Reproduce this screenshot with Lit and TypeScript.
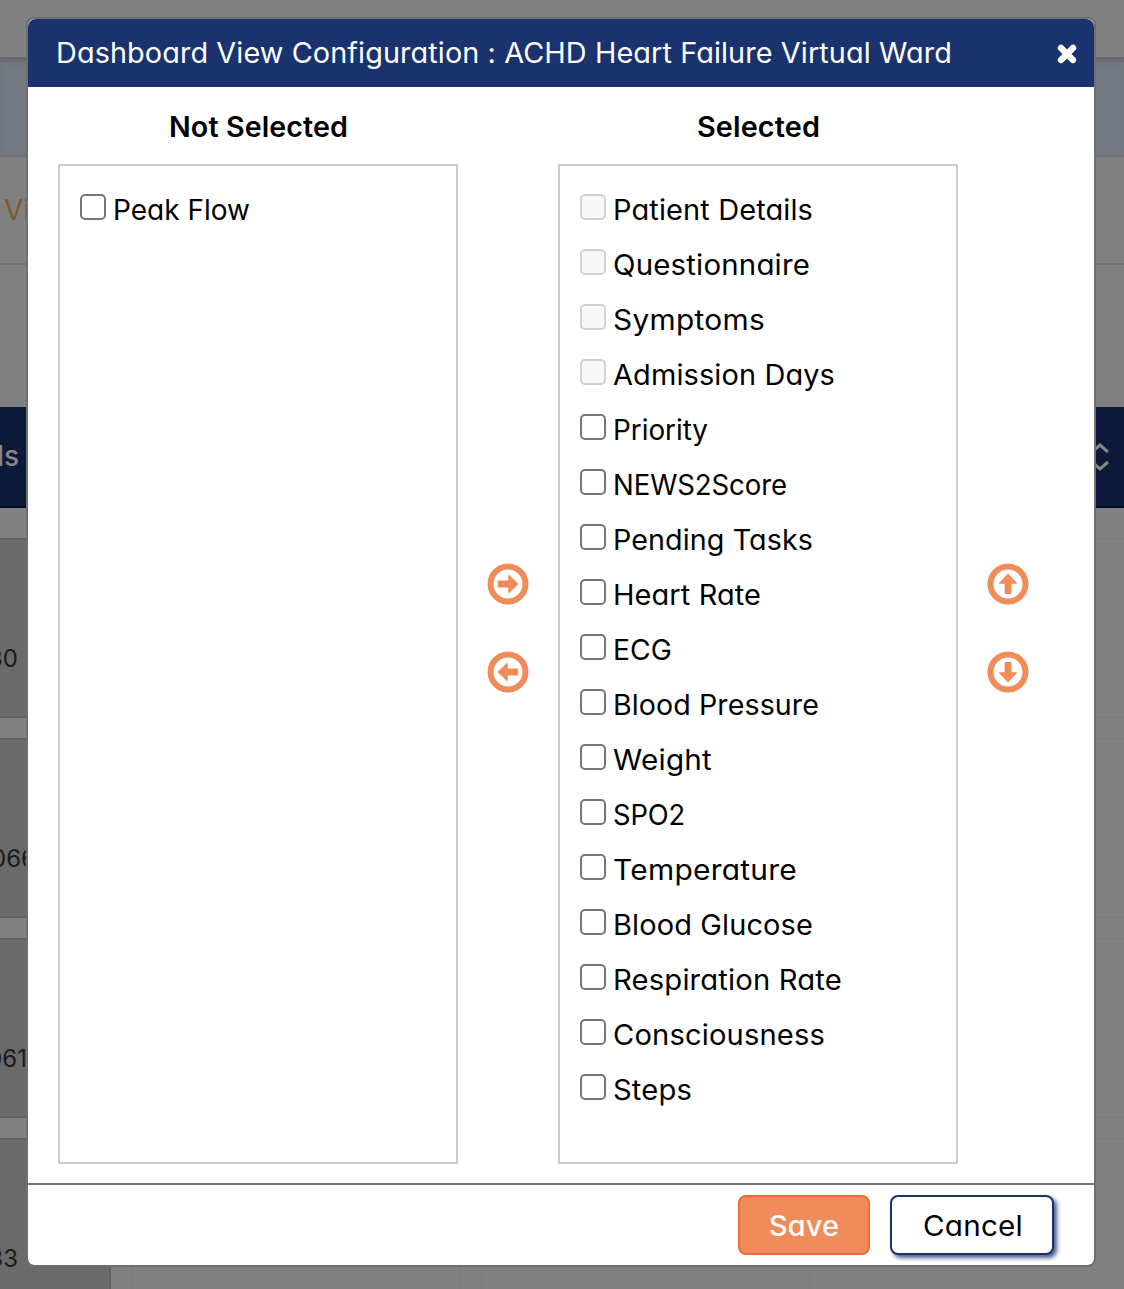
import { LitElement, html, css, svg } from "lit";
import { customElement, property, state } from "lit/decorators.js";

/** Text fitted to a given advance, mostly by stretching, the rest by tracking. */
@customElement("tracked-text")
class TrackedText extends LitElement {
  static styles = css`
    :host { display: inline-block; white-space: pre; padding-top: 1px; }
    .fit { display: block; }
    .text { display: inline-block; transform-origin: 0 50%; }
  `;
  @property() text = "";
  @property({ type: Number }) width = 0;
  @state() spacing = 0;
  @state() stretch = 1;

  firstUpdated() {
    const span = this.renderRoot.querySelector(".text")!;
    const natural = span.getBoundingClientRect().width;
    if (!this.width || !natural) return;
    this.stretch = 1 + (this.width / natural - 1) * 0.8;
    this.spacing = (this.width / this.stretch - natural) / Math.max(1, this.text.length);
  }

  render() {
    return html`<span class="fit" style="width:${this.width}px"><span class="text"
      style="letter-spacing:${this.spacing.toFixed(3)}px;transform:scaleX(${this.stretch.toFixed(4)})">${this.text}</span></span>`;
  }
}

interface Item { label: string; width: number; locked?: boolean; }

const available: Item[] = [{ label: "Peak Flow", width: 137 }];

const selected: Item[] = [
  { label: "Patient Details", width: 200, locked: true },
  { label: "Questionnaire", width: 197, locked: true },
  { label: "Symptoms", width: 152, locked: true },
  { label: "Admission Days", width: 222, locked: true },
  { label: "Priority", width: 95 },
  { label: "NEWS2Score", width: 174 },
  { label: "Pending Tasks", width: 200 },
  { label: "Heart Rate", width: 148 },
  { label: "ECG", width: 59 },
  { label: "Blood Pressure", width: 206 },
  { label: "Weight", width: 99 },
  { label: "SPO2", width: 72 },
  { label: "Temperature", width: 184 },
  { label: "Blood Glucose", width: 200 },
  { label: "Respiration Rate", width: 229 },
  { label: "Consciousness", width: 212 },
  { label: "Steps", width: 79 },
];

const arrow = (turn: number) => html`
  <button class="arrow" aria-label="Move">
    <svg width="42" height="42" viewBox="-21 -21 42 42">
      <circle r="17.5" fill="none" stroke="#f08c5a" stroke-width="6"></circle>
      ${svg`<path transform="rotate(${turn})" fill="#f08c5a"
        d="M-9.2 -3.4H.2V-8.3Q.2 -9.6 1.3 -8.8L9.8 -.7Q10.5 0 9.8 .7L1.3 8.8Q.2 9.6 .2 8.3V3.4H-9.2Q-10.2 3.4 -10.2 2.4V-2.4Q-10.2 -3.4 -9.2 -3.4Z"/>`}
    </svg>
  </button>`;

@customElement("app-root")
class AppRoot extends LitElement {
  static styles = css`
    :host {
      display: block; position: relative; width: 1124px; height: 1289px; overflow: hidden;
      background: #808080; color: #000;
      font-family: Inter, "Open Sans", "Liberation Sans", sans-serif;
      font-size: 28px; font-weight: 430; font-feature-settings: "cv11";
    }
    * { box-sizing: border-box; }
    .page { display: flex; flex-direction: column; height: 1289px; overflow: hidden; }
    .top { height: 57px; flex: none; }
    .band {
      height: 100px; flex: none; background: #747981;
      box-shadow: inset 0 7px 7px -4px #5f6469, inset 0 -3px 2px -1px #6d7178;
    }
    .tabs {
      height: 108px; flex: none; border-bottom: 2px solid #707070;
      padding-left: 4px; line-height: 107px; color: #80592b;
    }
    .space { height: 142px; flex: none; }
    .thead {
      height: 101px; flex: none; background: #0c1938; border-bottom: 2px solid #050d28;
      display: flex; justify-content: space-between; align-items: center;
      color: #858585; padding-right: 15px; margin-bottom: 30px;
    }
    .thead .col { margin-left: -3px; padding-bottom: 1px; font-weight: 500; }
    .record {
      height: 180px; flex: none; margin-bottom: 20px; display: flex; gap: 20px;
    }
    .cell { border: 2px solid #7d7d7d; flex: none; width: 330px; }
    .cell.id {
      width: 111px; background: #6a6a6a; border-color: #616161; border-left: 0;
      padding-top: 104px; line-height: 30px; font-size: 24px; color: #1b1b1b;
      overflow: hidden; display: flex; align-items: flex-start;
    }
    .cell.id .clip { width: 26px; display: flex; justify-content: flex-end; white-space: nowrap; }
    .clip .end { flex: none; }
    .end.a { margin-right: 8px; }
    .end.b { margin-right: -10px; }
    .end.c { margin-right: -1px; }
    .modal {
      position: absolute; left: 26px; top: 17px; width: 1070px; height: 1250px;
      border: 2px solid #6f6f6f; border-radius: 8px; background: #fff;
      display: flex; flex-direction: column; background-clip: padding-box;
    }
    .head {
      height: 68px; flex: none; background: #1a336f; color: #fff;
      border-radius: 8px 8px 0 0; padding: 0 16px 2px 28px;
      display: flex; align-items: center; justify-content: space-between;
    }
    .close { display: block; margin-top: 4px; }
    .body { display: flex; flex: 1; padding: 0 0 0 30px; }
    .col-list { width: 400px; display: flex; flex-direction: column; }
    .col-title {
      height: 77px; display: flex; align-items: center; justify-content: center;
      padding-top: 2px; font-weight: 560;
    }
    .list { height: 1000px; border: 2px solid #ccc; padding: 16px 0 0 20px; }
    .row { height: 55px; display: flex; align-items: center; }
    .box {
      appearance: none; margin: 0 7px 5px 0; width: 26px; height: 26px; flex: none;
      border: 2px solid #767676; border-radius: 5px; background: #fff;
    }
    .box:disabled { border-color: #d1d1d1; background: #f8f8f8; }
    .moves {
      width: 100px; display: flex; flex-direction: column; align-items: center;
      gap: 46px; padding-top: 476px;
    }
    .arrow { border: 0; background: none; padding: 0; margin: 0; width: 42px; height: 42px; }
    .arrow svg { display: block; }
    .foot {
      height: 82px; flex: none; border-top: 2px solid #747474;
      display: flex; justify-content: flex-end; gap: 20px; padding: 10px 40px 0 0;
    }
    .btn {
      height: 60px; border-radius: 8px; padding: 0 3px 0 0; font: inherit;
      font-feature-settings: "cv11"; display: flex; align-items: center; justify-content: center;
    }
    .save { width: 132px; background: #f08c5a; border: 2px solid #ed6c35; color: #fff; font-weight: 500; }
    .cancel {
      width: 164px; background: #fff; border: 2px solid #1a336f; color: #000;
      box-shadow: 3px 3px 4px #1a336fcc;
    }
  `;

  private item(i: Item) {
    return html`<label class="row">
      <input class="box" type="checkbox" ?disabled=${i.locked} />
      <tracked-text .text=${i.label} .width=${i.width}></tracked-text>
    </label>`;
  }

  private record(id: string, place: string) {
    return html`<div class="record">
      <div class="cell id"><div class="clip"><span class="end ${place}">${id}</span></div></div>
      <div class="cell"></div><div class="cell"></div><div class="cell"></div>
    </div>`;
  }

  render() {
    return html`
      <div class="page">
        <div class="top"></div>
        <div class="band"></div>
        <div class="tabs">Vi</div>
        <div class="space"></div>
        <div class="thead">
          <span class="col">ls</span>
          <svg width="18" height="28" viewBox="0 0 18 28" fill="none" stroke="#858585" stroke-width="3">
            <path d="M1 9L9 2L17 9M1 19L9 26L17 19"></path>
          </svg>
        </div>
        ${this.record("30", "a")} ${this.record("066", "b")}
        ${this.record("061", "c")} ${this.record("33", "a")}
      </div>
      <div class="modal">
        <div class="head">
          <tracked-text .text=${"Dashboard View Configuration : ACHD Heart Failure Virtual Ward"} .width=${896}></tracked-text>
          <svg class="close" width="22" height="22" viewBox="-11 -11 22 22" stroke="#fff" stroke-width="6.4" stroke-linecap="round">
            <path d="M-6 -6L6 6M6 -6L-6 6"></path>
          </svg>
        </div>
        <div class="body">
          <div class="col-list">
            <div class="col-title"><tracked-text .text=${"Not Selected"} .width=${179}></tracked-text></div>
            <div class="list">${available.map((i) => this.item(i))}</div>
          </div>
          <div class="moves">${arrow(0)}${arrow(180)}</div>
          <div class="col-list">
            <div class="col-title"><tracked-text .text=${"Selected"} .width=${123}></tracked-text></div>
            <div class="list">${selected.map((i) => this.item(i))}</div>
          </div>
          <div class="moves">${arrow(-90)}${arrow(90)}</div>
        </div>
        <div class="foot">
          <button class="btn save"><tracked-text .text=${"Save"} .width=${70}></tracked-text></button>
          <button class="btn cancel"><tracked-text .text=${"Cancel"} .width=${100}></tracked-text></button>
        </div>
      </div>
    `;
  }
}
